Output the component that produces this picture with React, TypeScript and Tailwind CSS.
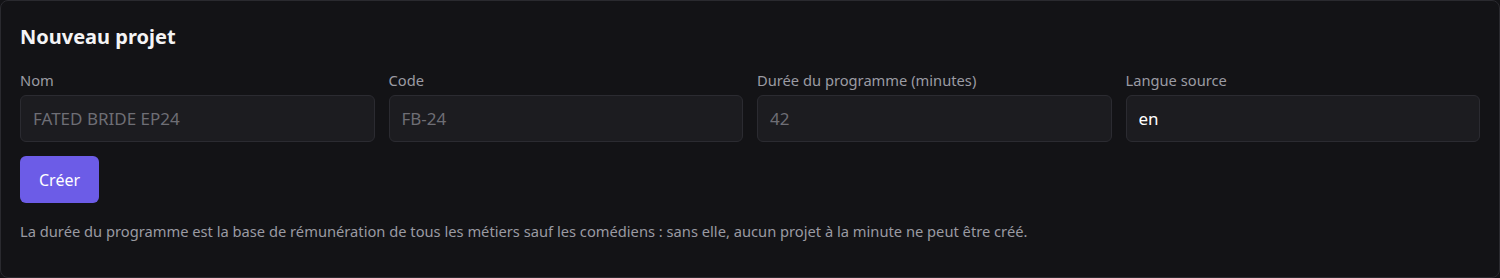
const fields = [
  { label: 'Nom', placeholder: 'FATED BRIDE EP24', value: '' },
  { label: 'Code', placeholder: 'FB-24', value: '' },
  { label: 'Durée du programme (minutes)', placeholder: '42', value: '' },
  { label: 'Langue source', placeholder: '', value: 'en' },
];

export default function App() {
  return (
    <div className="min-h-screen bg-[#131316] font-['Noto_Sans',sans-serif]">
      <div className="h-[278px] rounded-lg border border-[#2a2a2f] bg-[#131316] px-[19px] pt-[22px]">
        <h2 className="text-[20px] font-bold leading-7 text-[#f4f4f5]">Nouveau projet</h2>

        <div className="mt-[19px] grid grid-cols-4 gap-[14px]">
          {fields.map((f) => (
            <div key={f.label} className="flex flex-col">
              <label className="mb-[5px] text-[14.7px] leading-5 text-[#9b9ba3]">{f.label}</label>
              <input
                readOnly
                placeholder={f.placeholder}
                value={f.value}
                className="h-[47px] w-full rounded-md border border-[#2b2b31] bg-[#1c1c20] px-3 text-[17px] text-white outline-none placeholder:text-[#6e6e75]"
              />
            </div>
          ))}
        </div>

        <button className="mt-[14px] h-[47px] rounded-md bg-[#6c5ce7] px-[19px] text-[16px] text-white">
          Créer
        </button>

        <p className="mt-[18px] text-[14.7px] leading-5 text-[#9a9aa2]">
          La durée du programme est la base de rémunération de tous les métiers sauf les comédiens : sans elle, aucun projet à la minute ne peut être créé.
        </p>
      </div>
    </div>
  );
}
